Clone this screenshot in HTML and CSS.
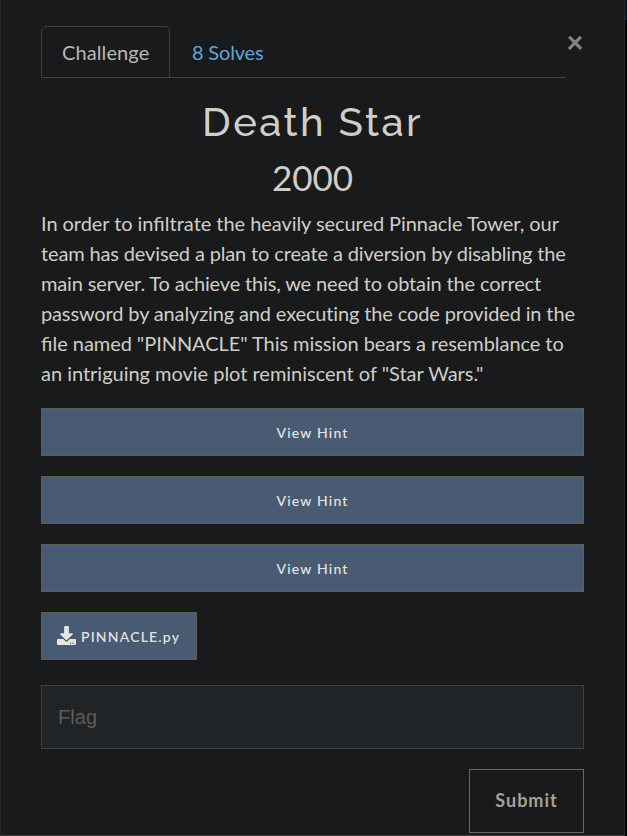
FILE: index.html
```html
<!DOCTYPE html>
<html lang="en">
<head>
<meta charset="utf-8">
<title>Death Star</title>
<link rel="stylesheet" href="styles.css">
</head>
<body>
<main class="modal">
  <header class="top">
    <nav class="tabs"><a class="tab active">Challenge</a><a class="tab link">8 Solves</a></nav>
    <button class="close" aria-label="Close">×</button>
  </header>
  <h2 class="title">Death Star</h2>
  <h3 class="value">2000</h3>
  <p class="desc">
    <span class="line snug">In order to <span class="plain">infiltrate</span> the heavily secured Pinnacle Tower, our</span>
    <span class="line tight">team has devised a plan to create a diversion by disabling the</span>
    <span class="line tighter">main server. To achieve this, we need to obtain the correct</span>
    <span class="line tight">password by analyzing and executing the code provided in the</span>
    <span class="line snug"><span class="plain">file</span> named "PINNACLE" This mission bears a resemblance to</span>
    <span class="line">an intriguing movie plot reminiscent of "Star Wars."</span>
  </p>
  <div class="hints">
    <a class="btn">View Hint</a>
    <a class="btn">View Hint</a>
    <a class="btn">View Hint</a>
  </div>
  <a class="btn file"><svg class="icon" viewBox="0 0 512 512"><path d="M216 0h80c13.300 0 24 10.700 24 24v168h87.700c17.800 0 26.700 21.500 14.100 34.100L269.700 378.300c-7.500 7.500-19.800 7.500-27.300 0L90.100 226.100c-12.600-12.600-3.700-34.100 14.100-34.100H192V24c0-13.300 10.700-24 24-24zm296 376v112c0 13.300-10.700 24-24 24H24c-13.300 0-24-10.700-24-24V376c0-13.300 10.700-24 24-24h146.700l49 49c20.100 20.100 52.500 20.100 72.600 0l49-49H488c13.300 0 24 10.700 24 24zm-124 88c0-11-9-20-20-20s-20 9-20 20 9 20 20 20 20-9 20-20zm64 0c0-11-9-20-20-20s-20 9-20 20 9 20 20 20 20-9 20-20z"/></svg><span>PINNACLE.py</span></a>
  <input class="flag" placeholder="Flag">
  <button class="submit">Submit</button>
</main>
</body>
</html>
```
FILE: styles.css
```css
* { box-sizing: border-box; }
body { margin: 0; background: linear-gradient(#001a33 20px, #000 20px); color: #d1cdc7; font-family: Lato, sans-serif; }
.modal { width: 625px; height: 836px; padding: 26px 40px 0 40px; background: #181a1b; border: 1px solid #292622; border-bottom-color: #413d3b; border-top: 0; border-image: none; overflow: hidden; display: flex; flex-direction: column; }
.top { display: flex; height: 52px; flex: none; }
.tabs { display: flex; width: 525px; flex: none; border-bottom: 1px solid #404040; }
.tab { height: 52px; padding: 0 20px; border: 1px solid transparent; line-height: 51px; font-size: 20px; }
.active { width: 129px; border-color: #404040; border-radius: 5px 5px 0 0; color: #bdb7af; letter-spacing: .1px; }
.link { color: #60a5dc; padding-left: 21px; letter-spacing: -.18px; }
.close { border: 0; padding: 0; margin: 0; width: 18px; height: 30px; background: none; color: #858381; font: 900 30px/30px Lato, sans-serif; }
.title { margin: 19px 0 0; height: 50px; text-align: center; font: 500 40px/50px Raleway, "Open Sans", sans-serif; letter-spacing: 2.400px; }
.value { margin: 9px 0 0; height: 42px; text-align: center; font-weight: 400; font-size: 35px; line-height: 42px; }
.desc { margin: 10px 0 20px; font-size: 20px; line-height: 30px; white-space: nowrap; }
.line { display: block; letter-spacing: -.02px; }
.snug { letter-spacing: -.06px; }
.tight { letter-spacing: -.14px; }
.tighter { letter-spacing: -.15px; }
.plain { letter-spacing: 0; }
.hints { display: flex; flex-direction: column; gap: 20px; margin-bottom: 20px; }
.btn { display: flex; align-items: center; justify-content: center; height: 48px; flex: none; border: 1px solid #645e53; background: #495b73; color: #e8e6e3; font-size: 14px; font-weight: 500; letter-spacing: 1.200px; }
.file { width: 156px; gap: 5px; justify-content: flex-start; padding-left: 15px; }
.icon { width: 19px; height: 19px; flex: none; margin-top: -1px; fill: currentColor; }
.flag { margin-top: 25px; height: 64px; flex: none; padding: 0 16px; border: 1px solid #3c4142; background: #202426; color: #d1cdc7; font: 20px "Liberation Sans", sans-serif; letter-spacing: .1px; }
.flag::placeholder { color: #605b53; opacity: 1; }
.submit { align-self: flex-end; width: 115px; height: 64px; flex: none; margin-top: 20px; padding: 0 0 2px; border: 1px solid #70675b; background: transparent; color: #a8a095; font: 700 18px Lato, sans-serif; letter-spacing: 1px; }
```
